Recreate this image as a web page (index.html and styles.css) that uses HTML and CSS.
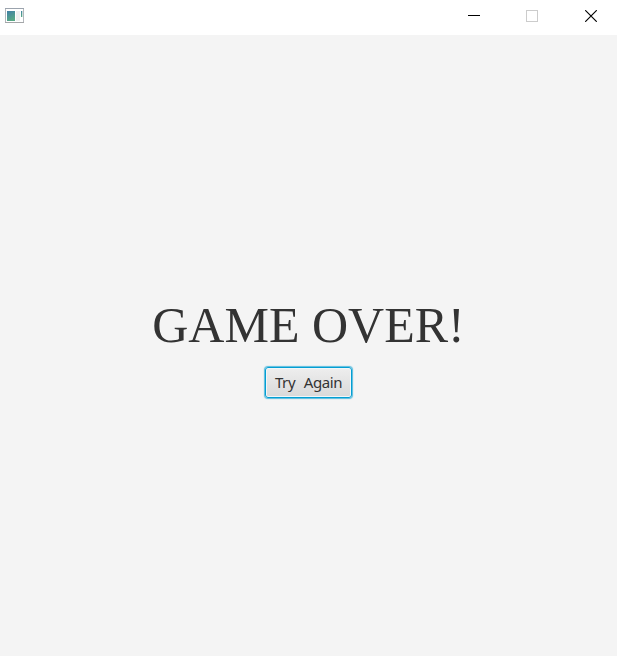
FILE: index.html
```
<!DOCTYPE html>
<html lang="en">
<head>
<meta charset="utf-8">
<title>Game</title>
<link rel="stylesheet" href="styles.css">
</head>
<body>
<header class="titlebar">
  <svg class="app-icon" width="19" height="16" viewBox="0 0 19 16">
    <defs><linearGradient id="g" x1="0" y1="0" x2=".4" y2="1"><stop offset="0" stop-color="#417fa6"/><stop offset="1" stop-color="#57a885"/></linearGradient></defs>
    <rect x="0.5" y="0.5" width="18" height="14" fill="#fff" stroke="#b4b8bd"/>
    <path d="M0 .5H19" stroke="#9ba3ad"/>
    <path d="M0 14.5H19" stroke="#a4a6a8"/>
    <rect x="2" y="3" width="8" height="10" fill="url(#g)"/>
    <rect x="11" y="3" width="4" height="10" fill="#f0f0f0"/>
    <rect x="16" y="3" width="1.3" height="6" fill="url(#g)"/>
  </svg>
  <div class="controls">
    <svg width="12" height="12" viewBox="0 0 12 12"><path d="M0 5.5H12" stroke="#000"/></svg>
    <svg class="maximize" width="12" height="12" viewBox="0 0 12 12"><rect x=".5" y=".5" width="11" height="11" fill="none" stroke="#ccc"/></svg>
    <svg width="12" height="12" viewBox="0 0 12 12"><path d="M.2 .2L11.8 11.8M11.8 .2L.2 11.8" stroke="#000" stroke-width="1.15"/></svg>
  </div>
</header>
<main class="scene">
  <h1 class="title">GAME OVER!</h1>
  <button class="retry">Try&nbsp; Again</button>
</main>
</body>
</html>
```
FILE: styles.css
```
body { margin: 0; height: 656px; display: flex; flex-direction: column; background: #f4f4f4; overflow: hidden; }
.titlebar { height: 35px; box-sizing: border-box; padding: 8px 20px 0 5px; display: flex; justify-content: space-between; background: #fff; }
.app-icon { display: block; }
.controls { display: flex; gap: 46px; padding-top: 2px; }
.controls svg { display: block; }
.controls .maximize { margin-right: 1px; }
.scene { flex: 1; display: flex; flex-direction: column; align-items: center; padding-top: 263px; }
.title { margin: 0; font: 400 50px/55px "Liberation Serif", serif; color: #333; white-space: nowrap; }
.retry { box-sizing: border-box; margin: 14px 0 0; width: 87px; height: 31px; padding: 0 0 1px; border: 1px solid #039ed3; border-radius: 3px; background: linear-gradient(#eeeeee, #d9d9d9); box-shadow: inset 0 0 0 1px #f0f6f8, 0 0 1px 1px rgba(3, 158, 211, .65); font: 15px/20px "Noto Sans", sans-serif; letter-spacing: -.4px; word-spacing: .8px; color: #333; white-space: nowrap; }
```
